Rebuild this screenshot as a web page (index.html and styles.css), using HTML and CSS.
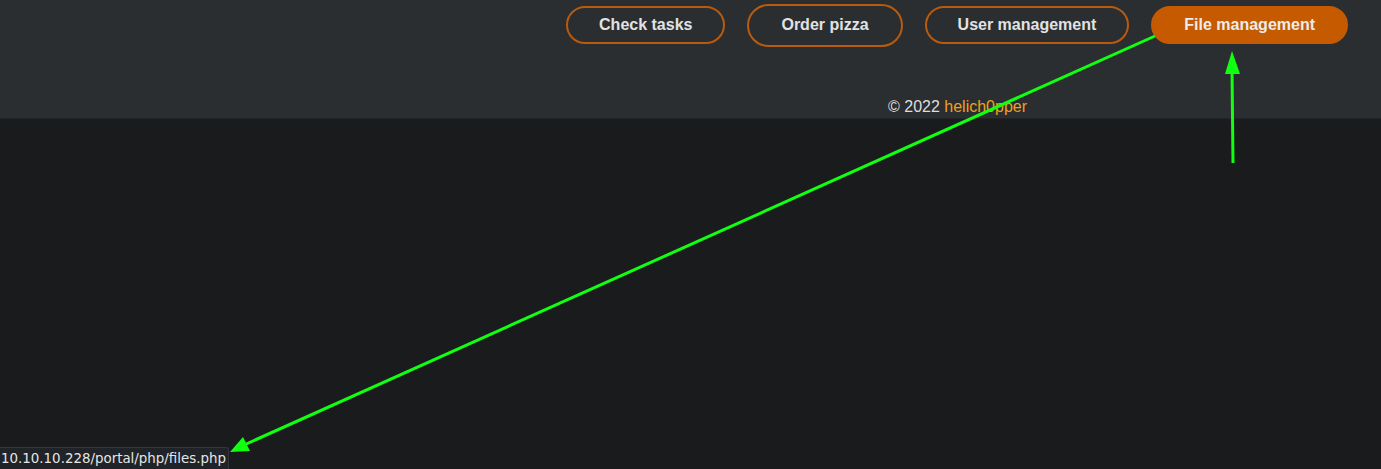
FILE: index.html
```html
<!DOCTYPE html>
<html>
<head>
<meta charset="utf-8">
<link rel="stylesheet" href="styles.css">
</head>
<body>
<header class="top">
  <nav class="nav">
    <a class="btn">Check tasks</a>
    <a class="btn btn-hover">Order pizza</a>
    <a class="btn">User management</a>
    <a class="btn btn-active">File management</a>
  </nav>
  <div class="copy">© 2022 <span class="author">helich0pper</span></div>
</header>
<main class="content"></main>
<div class="status">10.10.10.228/portal/php/files.php</div>
<svg class="arrows" width="1381" height="469" viewBox="0 0 1381 469">
  <line x1="1155" y1="36" x2="244" y2="445" stroke="#11ff11" stroke-width="3"/>
  <polygon points="230,452 243,437 250,451" fill="#11ff11"/>
  <line x1="1233" y1="163" x2="1232" y2="68" stroke="#11ff11" stroke-width="3"/>
  <polygon points="1232,51 1225,74 1240,74" fill="#11ff11"/>
</svg>
</body>
</html>
```
FILE: styles.css
```css
html, body {
  margin: 0;
  padding: 0;
}
body {
  width: 1381px;
  height: 469px;
  background: #1a1b1d;
  font-family: "Liberation Sans", Arial, sans-serif;
  overflow: hidden;
  position: relative;
}
.top {
  height: 119px;
  background: #2b2e31;
  border-bottom: 1px solid #222426;
  box-sizing: border-box;
  display: flex;
  flex-direction: column;
}
.nav {
  display: flex;
  justify-content: flex-end;
  align-items: center;
  gap: 22px;
  padding: 4px 33px 0 0;
  height: 42px;
}
.btn {
  display: flex;
  align-items: center;
  justify-content: center;
  height: 38px;
  box-sizing: border-box;
  padding: 0 31px;
  border: 2px solid #b95a0c;
  border-radius: 20px;
  color: #e2e2e2;
  font-weight: bold;
  font-size: 16px;
}
.btn-hover {
  height: 43px;
  padding: 0 32px;
  border-radius: 22px;
}
.btn-active {
  background: #c55a00;
  border-color: #c55a00;
  color: #ececec;
}
.copy {
  margin-top: 52px;
  padding-left: 888px;
  color: #dedede;
  font-size: 16px;
}
.author {
  color: #f0a01e;
}
.content {
  height: 350px;
}
.status {
  position: absolute;
  left: 0;
  bottom: 0;
  height: 22px;
  width: 229px;
  box-sizing: border-box;
  background: #202327;
  border: 1px solid #33373c;
  border-left: none;
  border-bottom: none;
  border-top-right-radius: 3px;
  color: #e6e6e6;
  font-family: "DejaVu Sans", sans-serif;
  font-size: 13.4px;
  line-height: 21px;
  padding-left: 1px;
  white-space: nowrap;
}
.arrows {
  position: absolute;
  left: 0;
  top: 0;
  pointer-events: none;
}
```
